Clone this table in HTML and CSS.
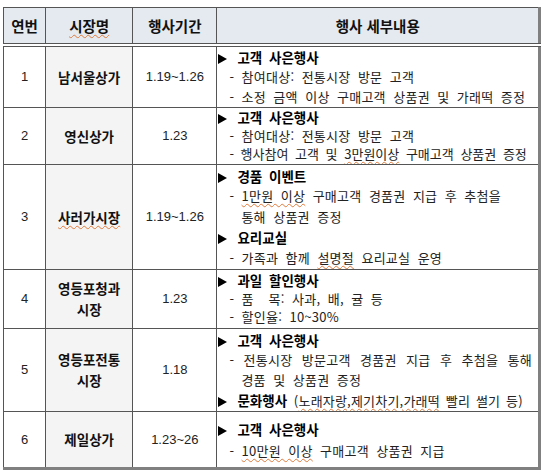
FILE: index.html
```html
<!DOCTYPE html>
<html lang="ko">
<head>
<meta charset="utf-8">
<link rel="stylesheet" href="styles.css">
</head>
<body>
<table class="ev">
  <colgroup>
    <col class="c1"><col class="c2"><col class="c3"><col class="c4">
  </colgroup>
  <thead>
    <tr class="hd">
      <th>연번</th>
      <th><span class="sp">시장명</span></th>
      <th>행사기간</th>
      <th>행사 세부내용</th>
    </tr>
  </thead>
  <tbody>
    <tr class="r1">
      <td class="no">1</td>
      <td class="nm">남서울상가</td>
      <td class="dt">1.19~1.26</td>
      <td class="ds">
        <div class="tt"><svg class="ar" viewBox="0 0 9 10" width="9" height="10"><path d="M0 0L9 5L0 10Z"/></svg>고객 사은행사</div>
        <div class="li">- 참여대상: 전통시장 방문 고객</div>
        <div class="li">- 소정 금액 이상 구매고객 상품권 및 가래떡 증정</div>
      </td>
    </tr>
    <tr class="r2">
      <td class="no">2</td>
      <td class="nm">영신상가</td>
      <td class="dt">1.23</td>
      <td class="ds tight">
        <div class="tt"><svg class="ar" viewBox="0 0 9 10" width="9" height="10"><path d="M0 0L9 5L0 10Z"/></svg>고객 사은행사</div>
        <div class="li">- 참여대상: 전통시장 방문 고객</div>
        <div class="li snug">- 행사참여 고객 및 <span class="sp">3만원이상</span> 구매고객 상품권 증정</div>
      </td>
    </tr>
    <tr class="r3">
      <td class="no">3</td>
      <td class="nm"><span class="sp">사러가시장</span></td>
      <td class="dt">1.19~1.26</td>
      <td class="ds loose">
        <div class="tt"><svg class="ar" viewBox="0 0 9 10" width="9" height="10"><path d="M0 0L9 5L0 10Z"/></svg>경품 이벤트</div>
        <div class="li">- <span class="sp">1만원 이상</span> 구매고객 경품권 지급 후 추첨을</div>
        <div class="li cont">통해 상품권 증정</div>
        <div class="tt"><svg class="ar" viewBox="0 0 9 10" width="9" height="10"><path d="M0 0L9 5L0 10Z"/></svg>요리교실</div>
        <div class="li">- 가족과 함께 <span class="sp">설명절</span> 요리교실 운영</div>
      </td>
    </tr>
    <tr class="r4">
      <td class="no">4</td>
      <td class="nm">영등포청과<br>시장</td>
      <td class="dt">1.23</td>
      <td class="ds tight">
        <div class="tt"><svg class="ar" viewBox="0 0 9 10" width="9" height="10"><path d="M0 0L9 5L0 10Z"/></svg>과일 할인행사</div>
        <div class="li">- 품&nbsp;&nbsp;목: 사과, 배, 귤 등</div>
        <div class="li">- 할인율: 10~30%</div>
      </td>
    </tr>
    <tr class="r5">
      <td class="no">5</td>
      <td class="nm">영등포전통<br>시장</td>
      <td class="dt">1.18</td>
      <td class="ds">
        <div class="tt"><svg class="ar" viewBox="0 0 9 10" width="9" height="10"><path d="M0 0L9 5L0 10Z"/></svg>고객 사은행사</div>
        <div class="li just">- 전통시장 방문고객 경품권 지급 후 추첨을 통해</div>
        <div class="li cont">경품 및 상품권 증정</div>
        <div class="tt"><svg class="ar" viewBox="0 0 9 10" width="9" height="10"><path d="M0 0L9 5L0 10Z"/></svg>문화행사 <span class="nb">(<span class="sp">노래자랑,제기차기,가래떡</span> 빨리 썰기 등)</span></div>
      </td>
    </tr>
    <tr class="r6">
      <td class="no">6</td>
      <td class="nm">제일상가</td>
      <td class="dt">1.23~26</td>
      <td class="ds wide">
        <div class="tt"><svg class="ar" viewBox="0 0 9 10" width="9" height="10"><path d="M0 0L9 5L0 10Z"/></svg>고객 사은행사</div>
        <div class="li">- <span class="sp">10만원 이상</span> 구매고객 상품권 지급</div>
      </td>
    </tr>
  </tbody>
</table>
</body>
</html>
```
FILE: styles.css
```css
html, body {
  margin: 0;
  padding: 0;
  background: #ffffff;
}
body {
  padding: 7px 0 0 3px;
  font-family: "Noto Sans CJK KR", "Noto Sans", sans-serif;
  color: #111;
}
.ev {
  border-collapse: collapse;
  table-layout: fixed;
  width: 538px;
  border-left: 1px solid #6a6a6a;
  border-top: 1px solid #6a6a6a;
  border-right: 3px solid #808080;
  border-bottom: 3px solid #808080;
}
.c1 { width: 42px; }
.c2 { width: 87px; }
.c3 { width: 84px; }
.c4 { width: 322px; }
.ev th, .ev td {
  border: 1px solid #555;
  padding: 0;
  vertical-align: middle;
  overflow: hidden;
}
.hd th {
  height: 35px;
  background: #e4eaf0;
  font-size: 14.5px;
  font-weight: 700;
  color: #111;
  text-align: center;
  border-bottom: 4px double #555;
  line-height: 20px;
}
.no {
  text-align: center;
  font-family: "Liberation Sans", sans-serif;
  font-size: 13px;
  line-height: 20px;
  color: #222;
}
.nm {
  background: #f4f4f4;
  text-align: center;
  font-size: 13.5px;
  font-weight: 700;
  line-height: 21px;
  color: #111;
}
.dt {
  text-align: center;
  font-family: "Liberation Sans", sans-serif;
  font-size: 13px;
  line-height: 20px;
  color: #222;
}
.ds {
  padding: 0 2px 0 4px;
  font-size: 13px;
  line-height: 20px;
  word-spacing: 3.5px;
  letter-spacing: 0.25px;
  color: #222;
  white-space: nowrap;
}
.ds.tight { line-height: 18.5px; }
.ds.loose { line-height: 20.5px; }
.ds.wide { line-height: 22px; }
.ds div { line-height: inherit; }
.tt {
  font-weight: 700;
  color: #000;
  font-size: 13.5px;
  letter-spacing: 0;
  word-spacing: 3px;
}
.ar {
  display: inline-block;
  vertical-align: -1px;
  margin: 0 10px 0 1px;
  fill: #000;
}
.nb {
  font-weight: 400;
  font-size: 13px;
  color: #222;
  letter-spacing: 0.2px;
  word-spacing: 2px;
}
.li { padding-left: 12px; }
.li.cont { padding-left: 24px; }
.li.snug { letter-spacing: 0; word-spacing: 3px; }
.li.just {
  padding-right: 6px;
  text-align: justify;
  text-align-last: justify;
}
.sp {
  text-decoration-line: underline;
  text-decoration-style: wavy;
  text-decoration-color: #e07a3a;
  text-decoration-thickness: 1px;
  text-underline-offset: 2px;
}
.r1 td { height: 60px; }
.r2 td { height: 56px; }
.r3 td { height: 104px; }
.r4 td { height: 58px; }
.r5 td { height: 82px; }
.r6 td { height: 55px; }
```
